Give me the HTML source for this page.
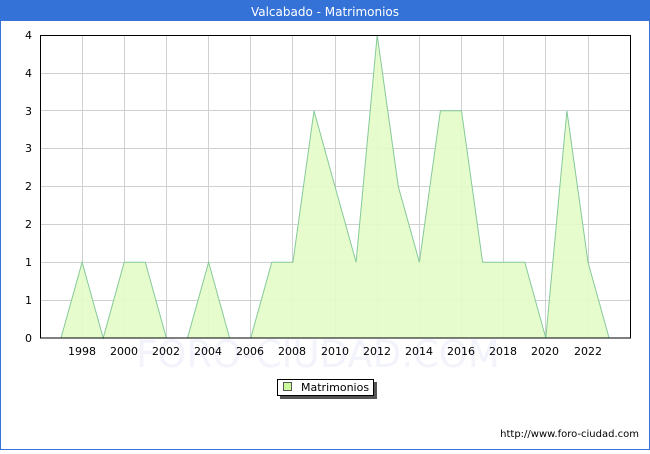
<!DOCTYPE html>
<html><head><meta charset="utf-8"><style>
body{margin:0;width:650px;height:450px;overflow:hidden;background:#fff;font-family:"DejaVu Sans","Liberation Sans",sans-serif}
</style></head><body>
<svg width="650" height="450" xmlns="http://www.w3.org/2000/svg" font-family="DejaVu Sans, Liberation Sans, sans-serif">
<rect x="0.5" y="0.5" width="649" height="449" fill="#fff" stroke="#3572d8"/>
<rect x="0" y="0" width="650" height="21" fill="#3572d8"/>
<text x="325" y="16" font-size="12" fill="#fff" text-anchor="middle">Valcabado - Matrimonios</text>
<text x="318" y="367" font-size="37" fill="#f3f3fb" text-anchor="middle">FORO-CIUDAD.COM</text>
<g stroke="#d0d0d0" stroke-width="1">
<line x1="40" x2="631" y1="73.5" y2="73.5"/><line x1="40" x2="631" y1="110.5" y2="110.5"/><line x1="40" x2="631" y1="148.5" y2="148.5"/><line x1="40" x2="631" y1="186.5" y2="186.5"/><line x1="40" x2="631" y1="224.5" y2="224.5"/><line x1="40" x2="631" y1="262.5" y2="262.5"/><line x1="40" x2="631" y1="300.5" y2="300.5"/>
<line x1="82.5" x2="82.5" y1="35" y2="338"/><line x1="124.5" x2="124.5" y1="35" y2="338"/><line x1="166.5" x2="166.5" y1="35" y2="338"/><line x1="208.5" x2="208.5" y1="35" y2="338"/><line x1="250.5" x2="250.5" y1="35" y2="338"/><line x1="292.5" x2="292.5" y1="35" y2="338"/><line x1="335.5" x2="335.5" y1="35" y2="338"/><line x1="377.5" x2="377.5" y1="35" y2="338"/><line x1="419.5" x2="419.5" y1="35" y2="338"/><line x1="461.5" x2="461.5" y1="35" y2="338"/><line x1="503.5" x2="503.5" y1="35" y2="338"/><line x1="545.5" x2="545.5" y1="35" y2="338"/><line x1="588.5" x2="588.5" y1="35" y2="338"/>
</g>
<polygon fill="#e3fcc8" fill-opacity="0.9" stroke="#86c99a" stroke-width="1" points="61,338 82.1,262.2 103.2,338 124.2,262.2 145.3,262.2 166.4,338 187.5,338 208.6,262.2 229.6,338 250.7,338 271.8,262.2 292.9,262.2 314,110.8 335,186.5 356.1,262.2 377.2,35 398.3,186.5 419.4,262.2 440.4,110.8 461.5,110.8 482.6,262.2 503.7,262.2 524.8,262.2 545.8,338 566.9,110.8 588,262.2 609.1,338"/>
<rect x="40.5" y="35.5" width="590" height="302.5" fill="none" stroke="#000"/>
<g font-size="11" fill="#000" text-anchor="end">
<text x="32" y="39">4</text><text x="32" y="77">4</text><text x="32" y="115">3</text><text x="32" y="152">3</text><text x="32" y="190">2</text><text x="32" y="228">2</text><text x="32" y="266">1</text><text x="32" y="304">1</text><text x="32" y="342">0</text>
</g>
<g font-size="11" fill="#000" text-anchor="middle">
<text x="82" y="355">1998</text><text x="124" y="355">2000</text><text x="166" y="355">2002</text><text x="208" y="355">2004</text><text x="250" y="355">2006</text><text x="292" y="355">2008</text><text x="335" y="355">2010</text><text x="377" y="355">2012</text><text x="419" y="355">2014</text><text x="461" y="355">2016</text><text x="503" y="355">2018</text><text x="545" y="355">2020</text><text x="588" y="355">2022</text>
</g>
<rect x="280" y="382" width="97" height="17" fill="#555"/>
<rect x="277.5" y="379.5" width="96" height="16" fill="#fff" stroke="#000"/>
<rect x="283.5" y="382.5" width="8" height="8" fill="#ccfa9c" stroke="#555"/>
<text x="301" y="391" font-size="11" fill="#000">Matrimonios</text>
<text x="639" y="437" font-size="10" fill="#000" text-anchor="end">http://www.foro-ciudad.com</text>
</svg>
</body></html>
